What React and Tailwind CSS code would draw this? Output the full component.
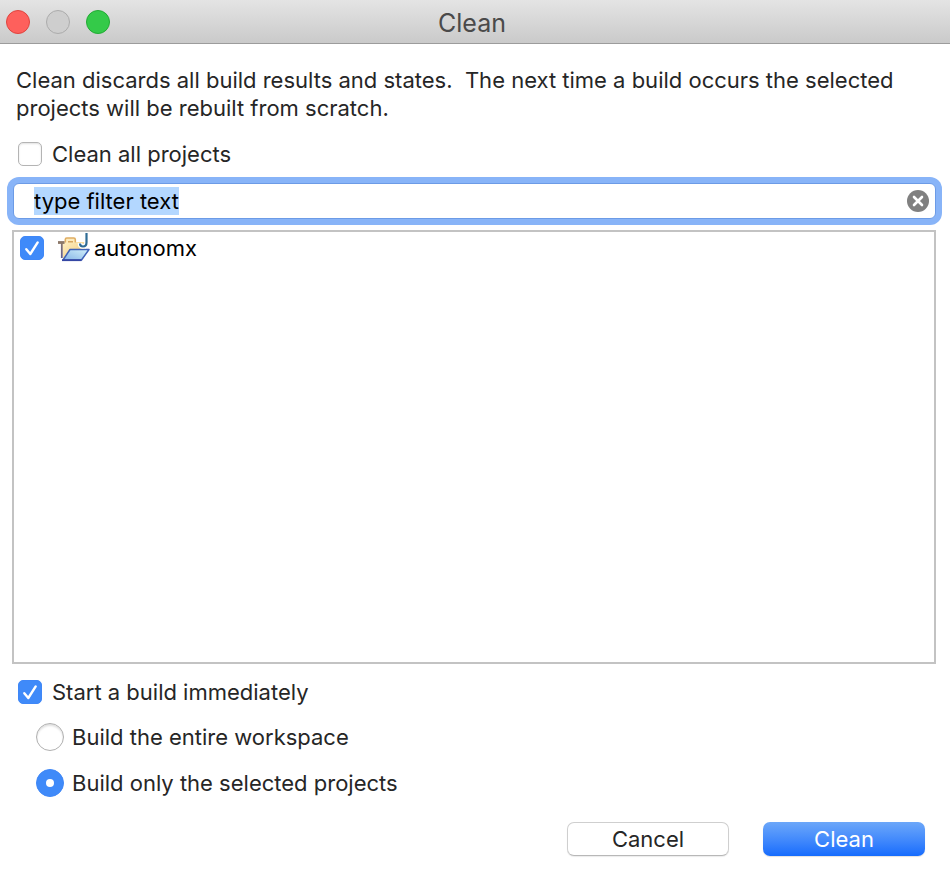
import { useEffect, useRef, useState } from "react";

function Checkbox({ id, checked, onChange }) {
  return (
    <span className="grid size-6 shrink-0">
      <input
        id={id}
        type="checkbox"
        checked={checked}
        onChange={(e) => onChange(e.target.checked)}
        className="peer col-start-1 row-start-1 size-6 appearance-none rounded-[5px] border border-[#b4b4b4] bg-white shadow-[inset_0_1px_2px_#0000001f] outline-none checked:border-[#3f87f7] checked:bg-[#3f8af9] checked:shadow-none"
      />
      <svg
        viewBox="0 0 24 24"
        className="pointer-events-none invisible col-start-1 row-start-1 size-6 peer-checked:visible"
        fill="none"
        stroke="white"
        strokeWidth="2.4"
        strokeLinecap="round"
        strokeLinejoin="round"
      >
        <path d="M6.300 13.200 10.300 18 17.700 6.400" />
      </svg>
    </span>
  );
}

function Radio({ id, checked, onChange }) {
  return (
    <span className="grid size-7 shrink-0 place-items-center">
      <input
        id={id}
        type="radio"
        name="scope"
        checked={checked}
        onChange={onChange}
        className="peer col-start-1 row-start-1 size-7 appearance-none rounded-full border border-[#b0b0b0] bg-white shadow-[inset_0_2px_2px_#0000001f] outline-none checked:border-[#3f87f7] checked:bg-[#3f8af9] checked:shadow-none"
      />
      <span className="pointer-events-none invisible col-start-1 row-start-1 size-2 rounded-full bg-white peer-checked:visible" />
    </span>
  );
}

function ProjectIcon() {
  return (
    <svg viewBox="0 0 32 30" className="h-[30px] w-8 shrink-0" fill="none">
      <defs>
        <linearGradient id="folderBack" x1="0" y1="0" x2="1" y2="1">
          <stop offset="0" stopColor="#fff0c4" />
          <stop offset="1" stopColor="#efc878" />
        </linearGradient>
        <linearGradient id="folderFront" x1="1" y1="0" x2="0" y2="1">
          <stop offset="0" stopColor="#d3f1fb" />
          <stop offset="1" stopColor="#86b4e6" />
        </linearGradient>
        <linearGradient id="folderEdge" x1="0" y1="8" x2="0" y2="27" gradientUnits="userSpaceOnUse">
          <stop offset="0" stopColor="#8b7768" />
          <stop offset="1" stopColor="#5a5a98" />
        </linearGradient>
      </defs>
      <path d="M4 9h23v8L5 26Z" fill="url(#folderBack)" />
      <path d="M7.300 9.500V6.500q0-1.500 1.500-1.500h7q1.500 0 1.500 1.500V9.500" fill="#fdebbd" stroke="#dfad62" strokeWidth="1.600" />
      <path d="M10 8.800h5" stroke="#cf9a50" strokeWidth="1.300" />
      <path d="M3.800 10v15" stroke="url(#folderEdge)" strokeWidth="1.800" />
      <path d="M0 9.500h6.500" stroke="#8b7768" strokeWidth="2.800" />
      <path d="M12 16.500H31L23.500 27H5Z" fill="url(#folderFront)" stroke="#3f62b8" strokeWidth="1.500" strokeLinejoin="round" />
      <path d="M4 27.200h19.500" stroke="#3547a4" strokeWidth="1.800" />
      <path d="M28.500 0v9.500q0 4-3.500 4-3 0-3-3.500" stroke="white" strokeWidth="4.600" />
      <path d="M28.500 0v9.500q0 4-3.500 4-3 0-3-3" stroke="#2f6c95" strokeWidth="2.200" />
    </svg>
  );
}

export default function App() {
  const [all, setAll] = useState(false);
  const [project, setProject] = useState(true);
  const [build, setBuild] = useState(true);
  const [scope, setScope] = useState("selected");
  const [filter, setFilter] = useState("type filter text");
  const filterRef = useRef(null);

  useEffect(() => {
    filterRef.current.focus();
    filterRef.current.select();
  }, []);

  return (
    <div className="flex min-h-screen flex-col bg-white font-['Inter','Liberation_Sans',sans-serif] text-[22px] leading-7 text-[#262626]">
      <header className="grid h-11 grid-cols-[1fr_auto_1fr] items-center border-b border-[#9c9c9c] bg-linear-to-b from-[#e4e4e4] to-[#cacaca] pr-3 pl-[6px]">
        <div className="flex gap-4">
          <button aria-label="Close" className="size-6 rounded-full border border-[#e0443e] bg-[#fe605c]" />
          <button aria-label="Minimize" className="size-6 rounded-full border border-[#acacac] bg-[#cecece]" />
          <button aria-label="Zoom" className="size-6 rounded-full border border-[#22ab34] bg-[#34ca49]" />
        </div>
        <h1 className="pt-[2px] text-[25px] text-[#4a4a4a]">Clean</h1>
      </header>

      <main className="flex flex-1 flex-col pt-[22px] pr-[14px] pb-6 pl-3">
        <p className="pl-1">
          Clean discards all build results and states.&nbsp; The next time a build occurs the selected projects will be
          rebuilt from scratch.
        </p>

        <div className="mt-[18px] flex items-center gap-[10px] px-[6px]">
          <Checkbox id="all" checked={all} onChange={setAll} />
          <label htmlFor="all">Clean all projects</label>
        </div>

        <div className="mt-[15px] ml-px flex h-9 items-center rounded-md border border-[#6c9be6] bg-white pr-[6px] pl-5 ring-6 ring-[#88b4f8]">
          <input
            ref={filterRef}
            type="text"
            aria-label="Filter projects"
            value={filter}
            onChange={(e) => setFilter(e.target.value)}
            className="h-7 min-w-0 flex-1 text-black outline-none selection:bg-[#b3d7ff] selection:text-black"
          />
          <button aria-label="Clear filter" onClick={() => setFilter("")}>
            <svg viewBox="0 0 22 22" className="size-[22px]">
              <circle cx="11" cy="11" r="11" fill="#808080" />
              <path d="m7 7 8 8m0-8-8 8" stroke="white" strokeWidth="2.600" strokeLinecap="round" />
            </svg>
          </button>
        </div>

        <ul className="mt-[11px] flex-1 border-2 border-[#c3c3c3] px-[6px] text-black">
          <li className="flex h-8 items-center">
            <Checkbox id="autonomx" checked={project} onChange={setProject} />
            <label htmlFor="autonomx" className="ml-[14px] flex items-center gap-1">
              <ProjectIcon />
              autonomx
            </label>
          </li>
        </ul>

        <div className="mt-[14px] flex items-center gap-[10px] px-[6px]">
          <Checkbox id="build" checked={build} onChange={setBuild} />
          <label htmlFor="build">Start a build immediately</label>
        </div>
        <div className="mt-[17px] flex flex-col gap-[18px] pl-6">
          <div className="flex items-center gap-2">
            <Radio id="workspace" checked={scope === "workspace"} onChange={() => setScope("workspace")} />
            <label htmlFor="workspace">Build the entire workspace</label>
          </div>
          <div className="flex items-center gap-2">
            <Radio id="selected" checked={scope === "selected"} onChange={() => setScope("selected")} />
            <label htmlFor="selected">Build only the selected projects</label>
          </div>
        </div>

        <footer className="mt-[25px] flex justify-end gap-[34px] pr-[11px]">
          <button className="flex h-[34px] w-[162px] items-center justify-center rounded-[7px] border border-[#cfcfcf] border-b-[#b8b8b8] bg-white shadow-[0_1px_1px_#00000014]">
            Cancel
          </button>
          <button className="flex h-[34px] w-[162px] items-center justify-center rounded-[7px] bg-linear-to-b from-[#6ca7f9] to-[#146bfd] text-white shadow-[0_1px_1px_#00000020]">
            Clean
          </button>
        </footer>
      </main>
    </div>
  );
}
